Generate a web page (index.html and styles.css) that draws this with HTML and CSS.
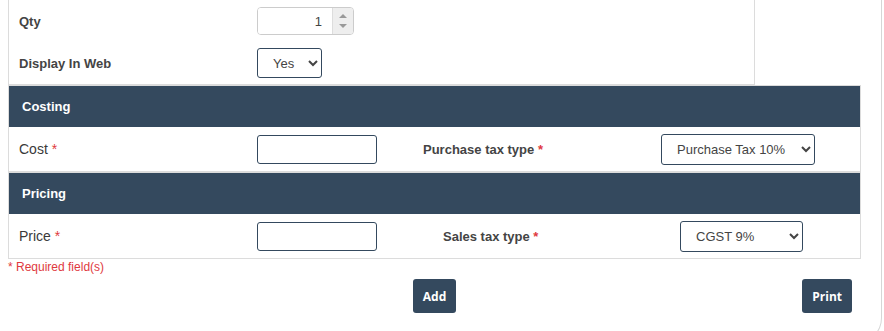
FILE: index.html
```html
<!DOCTYPE html>
<html lang="en">
<head>
    <meta charset="UTF-8">
    <meta name="viewport" content="width=device-width, initial-scale=1.0">
    <title>Product</title>
    <link rel="stylesheet" href="styles.css">
</head>
<body>
    <div class="frame">
        <div class="panel">
            <div class="box box-top">
                <div class="row">
                    <span class="label label-strong">Qty</span>
                    <div class="spinner">
                        <input type="text" class="spinner-input" value="1">
                        <span class="spinner-btns">
                            <span class="arrow-up"></span>
                            <span class="arrow-down"></span>
                        </span>
                    </div>
                </div>
                <div class="row">
                    <span class="label label-strong">Display In Web</span>
                    <select class="select select-yes">
                        <option>Yes</option>
                        <option>No</option>
                    </select>
                </div>
            </div>

            <div class="box section">
                <div class="section-head">Costing</div>
                <div class="row row-field">
                    <span class="label">Cost <span class="req-mark">*</span></span>
                    <input type="text" class="field">
                    <span class="tax-label tax-label-cost">Purchase tax type <span class="req-mark">*</span></span>
                    <select class="select select-purchase">
                        <option>Purchase Tax 10%</option>
                    </select>
                </div>
            </div>

            <div class="box section">
                <div class="section-head">Pricing</div>
                <div class="row row-field">
                    <span class="label">Price <span class="req-mark">*</span></span>
                    <input type="text" class="field">
                    <span class="tax-label tax-label-price">Sales tax type <span class="req-mark">*</span></span>
                    <select class="select select-sales">
                        <option>CGST 9%</option>
                    </select>
                </div>
            </div>

            <p class="required">* Required field(s)</p>

            <div class="actions">
                <span></span>
                <button class="btn">Add</button>
                <button class="btn btn-print">Print</button>
            </div>
        </div>
    </div>
</body>
</html>
```

FILE: styles.css
```css
html, body {
    overflow: hidden;
}
body {
    margin: 0;
    font-family: "Liberation Sans", Arial, sans-serif;
    font-size: 13px;
    color: #333;
    background: #fff;
}
.frame {
    width: 882px;
    height: 344px;
    box-sizing: border-box;
    border-right: 1px solid #d6d6d6;
    border-bottom: 1px solid #d6d6d6;
    border-bottom-right-radius: 26px;
}
.panel {
    padding-left: 8px;
}
.box {
    border: 1px solid #dcdcdc;
    box-sizing: border-box;
}
.box-top {
    width: 747px;
    border-top: none;
}
.box-top .row {
    height: 42px;
}
.section {
    width: 853px;
}
.section-head {
    height: 41px;
    line-height: 41px;
    background: #34495e;
    color: #fff;
    font-weight: bold;
    padding-left: 13px;
}
.row {
    display: flex;
    align-items: center;
}
.row-field {
    height: 44px;
}
.label {
    width: 248px;
    padding-left: 10px;
    box-sizing: border-box;
    font-size: 14px;
    color: #3a3a3a;
}
.label-strong {
    font-size: 13px;
    font-weight: bold;
    color: #444;
}
.req-mark {
    color: #e0393e;
}
.field {
    width: 120px;
    height: 29px;
    box-sizing: border-box;
    border: 1px solid #34495e;
    border-radius: 3px;
    padding: 0 6px;
    font: inherit;
}
.tax-label {
    box-sizing: border-box;
    font-weight: bold;
    color: #444;
}
.tax-label-cost {
    width: 284px;
    padding-left: 46px;
}
.tax-label-price {
    width: 303px;
    padding-left: 66px;
}
.select {
    height: 31px;
    box-sizing: border-box;
    border: 1px solid #34495e;
    border-radius: 3px;
    background: #fff;
    color: #444;
    font-family: "Liberation Sans", Arial, sans-serif;
    font-size: 13px;
    padding: 0 8px 0 11px;
}
.select-yes {
    width: 65px;
    height: 30px;
}
.select-purchase {
    width: 154px;
}
.select-sales {
    width: 123px;
}
.spinner {
    display: flex;
    width: 97px;
    height: 28px;
    box-sizing: border-box;
    border: 1px solid #ccc;
    border-radius: 4px;
    overflow: hidden;
}
.spinner-input {
    width: 74px;
    flex: none;
    box-sizing: border-box;
    border: none;
    outline: none;
    text-align: right;
    padding: 0 10px 0 0;
    font: inherit;
    color: #444;
}
.spinner-btns {
    flex: 1;
    display: flex;
    flex-direction: column;
    align-items: center;
    justify-content: center;
    gap: 6px;
    background: #eee;
    border-left: 1px solid #ddd;
}
.arrow-up,
.arrow-down {
    width: 0;
    height: 0;
    border-left: 4px solid transparent;
    border-right: 4px solid transparent;
}
.arrow-up {
    border-bottom: 4px solid #999;
}
.arrow-down {
    border-top: 4px solid #999;
}
.required {
    margin: 1px 0 0;
    line-height: 14px;
    font-size: 12px;
    color: #e0393e;
}
.actions {
    width: 853px;
    margin-top: 5px;
    display: grid;
    grid-template-columns: 1fr auto 1fr;
    align-items: center;
}
.btn {
    height: 34px;
    padding: 0 10px;
    border: none;
    border-radius: 3px;
    background: #34495e;
    color: #fff;
    font-family: "Open Sans", sans-serif;
    font-weight: bold;
    font-size: 12px;
    cursor: pointer;
}
.btn-print {
    justify-self: end;
    margin-right: 9px;
}
```
